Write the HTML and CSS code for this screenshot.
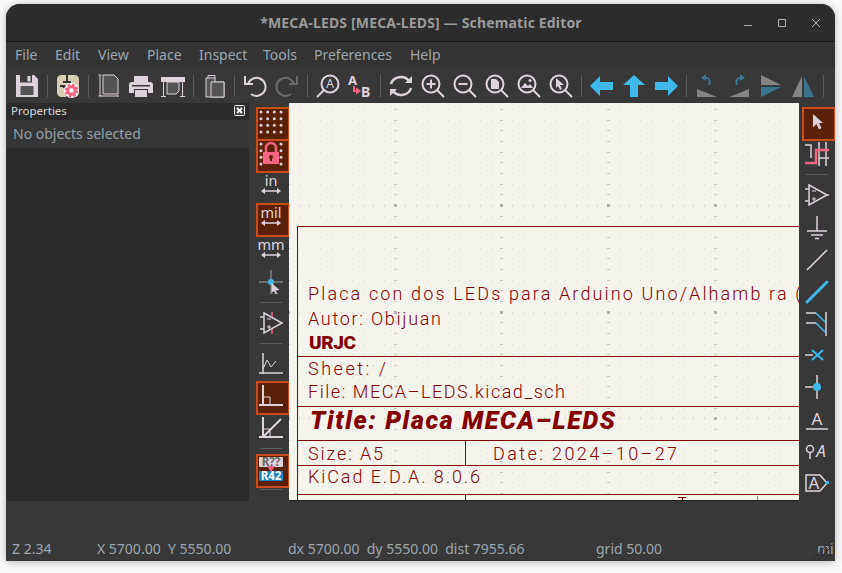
FILE: index.html
```html
<!DOCTYPE html>
<html lang="en">
<head>
<meta charset="utf-8">
<title>Schematic Editor</title>
<link rel="stylesheet" href="styles.css">
</head>
<body>
<div class="window">
  <header class="titlebar">
    <div class="title">*MECA-LEDS [MECA-LEDS] — Schematic Editor</div>
    <div class="wincontrols">
      <svg class="wc" viewBox="0 0 34 24"><path class="wcl" d="M13 14.500h8"/></svg>
      <svg class="wc" viewBox="0 0 34 24"><path class="wcl" d="M13.500 8.500h7v7h-7z"/></svg>
      <svg class="wc" viewBox="0 0 34 24"><path class="wcl" d="M13 8l8 8M21 8l-8 8"/></svg>
    </div>
  </header>
  <nav class="menubar">
    <span class="m m-file">File</span><span class="m m-edit">Edit</span><span class="m m-view">View</span><span class="m m-place">Place</span><span class="m m-inspect">Inspect</span><span class="m m-tools">Tools</span><span class="m m-prefs">Preferences</span><span class="m">Help</span>
  </nav>
  <div class="toolbar">
    <span class="tb"><svg class="ico" viewBox="0 0 24 24"><path class="f" d="M1 1h18l4 4v18H1z"/><path class="fd" d="M5 1h12v7.500H5z"/><path class="f" d="M12.500 2h3v5.500h-3z"/><path class="fg" d="M5.500 12h13v9h-13z"/></svg></span>
    <span class="vsep"></span>
    <span class="tb"><svg class="ico" viewBox="0 0 24 24"><rect x="1" y="1" width="22" height="22" rx="4.500" fill="#d6cfb4"/><path d="M11 1v7M7 8h8M4 12h6M11 13v10M7 13h4" stroke="#333" stroke-width="2" fill="none"/><circle cx="15.500" cy="16.500" r="7.500" fill="#fff"/><circle cx="15.500" cy="16.500" r="3.800" fill="none" stroke="#f2647f" stroke-width="3"/><circle cx="15.500" cy="16.500" r="5.800" fill="none" stroke="#f2647f" stroke-width="2.200" stroke-dasharray="2.500 2.050"/></svg></span>
    <span class="vsep"></span>
    <span class="tb"><svg class="ico" viewBox="0 0 24 24"><path class="fg s1" d="M6 1h11l4 4v15H6z"/><path class="s1" d="M1.500 1h3M3 1v21M1.500 22h3M4 22h17M21 21v2"/></svg></span>
    <span class="tb"><svg class="ico" viewBox="0 0 24 24"><path class="f" d="M5 2h14v6H5z"/><path class="f" d="M3 8h18a3 3 0 0 1 3 3v8h-5v-4H5v4H0v-8a3 3 0 0 1 3-3z"/><path class="f" d="M6 16h12v7H6z"/><path class="fd" d="M3 11h18v1.500H3z"/></svg></span>
    <span class="tb"><svg class="ico" viewBox="0 0 24 24"><path class="f" d="M0 3h24v5H0z"/><path class="s1" d="M2.500 8v14M21.500 8v14M0 22.500h5M19 22.500h5"/><path class="fg s1" d="M6 8h12v9l-3 3H6z"/></svg></span>
    <span class="vsep"></span>
    <span class="tb"><svg class="ico" viewBox="0 0 24 24"><path class="fg s1" d="M4 4h9v4h9v15H4z"/><path class="fg s1" d="M9 8h13v15H9z"/><path class="s1" d="M6 4V1.500h7V4"/></svg></span>
    <span class="vsep"></span>
    <span class="tb"><svg class="ico" viewBox="0 0 24 24"><path class="s2" d="M5 10a9 9 0 1 1 3 10"/><path class="s2" d="M2 2v8h8"/></svg></span>
    <span class="tb"><svg class="ico" viewBox="0 0 24 24"><path class="s2 dim" d="M19 10a9 9 0 1 0-3 10"/><path class="s2 dim" d="M22 2v8h-8"/></svg></span>
    <span class="vsep"></span>
    <span class="tb"><svg class="ico" viewBox="0 0 24 24"><circle class="s2" cx="14" cy="10" r="8.500"/><path class="s2" d="M8 16l-7 7"/><text class="it" x="14" y="14" text-anchor="middle">A</text></svg></span>
    <span class="tb"><svg class="ico" viewBox="0 0 24 24"><text class="it bold" x="0" y="11">A</text><text class="it bold big" x="13" y="23">B</text><path class="pk" d="M6 12v5h3"/><path class="pf" d="M8 13.500l5 3.500-5 3.500z"/></svg></span>
    <span class="vsep"></span>
    <span class="tb"><svg class="ico" viewBox="0 0 24 24"><path class="s25" d="M2 10a10 9 0 0 1 18-3"/><path class="s25" d="M22 14a10 9 0 0 1-18 3"/><path class="f" d="M16 9h7V2zM8 15H1v7z"/></svg></span>
    <span class="tb"><svg class="ico" viewBox="0 0 24 24"><circle class="s2" cx="10" cy="10" r="8.500"/><path class="s2" d="M16 16l7 7M10 5.500v9M5.500 10h9"/></svg></span>
    <span class="tb"><svg class="ico" viewBox="0 0 24 24"><circle class="s2" cx="10" cy="10" r="8.500"/><path class="s2" d="M16 16l7 7M5.500 10h9"/></svg></span>
    <span class="tb"><svg class="ico" viewBox="0 0 24 24"><circle class="s2" cx="10" cy="10" r="8.500"/><path class="s2" d="M16 16l7 7"/><path class="f" d="M6 5h5l3 3v7H6z"/></svg></span>
    <span class="tb"><svg class="ico" viewBox="0 0 24 24"><circle class="s2" cx="10" cy="10" r="8.500"/><path class="s2" d="M16 16l7 7"/><path class="f" d="M4 14l4-5 3 3 2-2 3 4z"/><circle class="f" cx="13" cy="6.500" r="1.500"/></svg></span>
    <span class="tb"><svg class="ico" viewBox="0 0 24 24"><circle class="s2" cx="10" cy="10" r="8.500"/><path class="s2" d="M16 16l7 7"/><path class="f" d="M7 4l8 7h-4l2 4-2 1-2-4-2 2z"/></svg></span>
    <span class="vsep"></span>
    <span class="tb"><svg class="ico" viewBox="0 0 24 24"><path class="bl" d="M0 12l10-10v6h13v8H10v6z"/></svg></span>
    <span class="tb"><svg class="ico" viewBox="0 0 24 24"><path class="bl" d="M12 1l11 10h-7v12H8V11H1z"/></svg></span>
    <span class="tb"><svg class="ico" viewBox="0 0 24 24"><path class="bl" d="M24 12L14 2v6H1v8h13v6z"/></svg></span>
    <span class="vsep"></span>
    <span class="tb"><svg class="ico" viewBox="0 0 24 24"><path class="gr" d="M2 15l20 8H2z"/><path class="db" d="M9 4c4-1 7 2 5 7"/><path class="dbf" d="M11 0L6 4l5 3z"/></svg></span>
    <span class="tb"><svg class="ico" viewBox="0 0 24 24"><path class="gr" d="M22 15L2 23h20z"/><path class="db" d="M15 4c-4-1-7 2-5 7"/><path class="dbf" d="M13 0l5 4-5 3z"/></svg></span>
    <span class="tb"><svg class="ico" viewBox="0 0 24 24"><path class="gr" d="M2 1l20 10H2z"/><path class="dbf" d="M2 13h20L2 23z"/></svg></span>
    <span class="tb"><svg class="ico" viewBox="0 0 24 24"><path class="gr" d="M11 2v21H1z"/><path class="dbf" d="M13 2v21h10z"/></svg></span>
    <span class="vsep"></span>
  </div>
  <main class="workarea">
    <aside class="panel">
      <div class="panel-head"><span>Properties</span><svg class="closebox" viewBox="0 0 11 11"><rect class="cb-f" x="0.500" y="0.500" width="10" height="10" rx="1"/><path class="cb-x" d="M3 3l5 5M8 3l-5 5"/></svg></div>
      <div class="panel-body">No objects selected</div>
    </aside>
    <div class="ltools">
      <span class="tb on"><svg class="ico" viewBox="0 0 24 24"><g class="f"><circle cx="2" cy="2" r="1.500"/><circle cx="8.700" cy="2" r="1.500"/><circle cx="15.300" cy="2" r="1.500"/><circle cx="22" cy="2" r="1.500"/><circle cx="2" cy="8.700" r="1.500"/><circle cx="8.700" cy="8.700" r="1.500"/><circle cx="15.300" cy="8.700" r="1.500"/><circle cx="22" cy="8.700" r="1.500"/><circle cx="2" cy="15.300" r="1.500"/><circle cx="8.700" cy="15.300" r="1.500"/><circle cx="15.300" cy="15.300" r="1.500"/><circle cx="22" cy="15.300" r="1.500"/><circle cx="2" cy="22" r="1.500"/><circle cx="8.700" cy="22" r="1.500"/><circle cx="15.300" cy="22" r="1.500"/><circle cx="22" cy="22" r="1.500"/></g></svg></span>
      <span class="tb on"><svg class="ico" viewBox="0 0 24 24"><g class="f"><circle cx="2" cy="2" r="1.500"/><circle cx="22" cy="2" r="1.500"/><circle cx="2" cy="8.700" r="1.500"/><circle cx="22" cy="8.700" r="1.500"/><circle cx="2" cy="15.300" r="1.500"/><circle cx="22" cy="15.300" r="1.500"/><circle cx="2" cy="22" r="1.500"/><circle cx="22" cy="22" r="1.500"/></g><path class="pk25" d="M7 10V6a5 5 0 0 1 10 0v4"/><path class="pf" d="M5 10h14a1 1 0 0 1 1 1v10a1 1 0 0 1-1 1H5a1 1 0 0 1-1-1V11a1 1 0 0 1 1-1z"/><circle cx="12" cy="15" r="2" fill="#5a2008"/><path d="M11 15h2v4h-2z" fill="#5a2008"/></svg></span>
      <span class="tb"><svg class="ico" viewBox="0 0 24 24"><text class="unit" x="12" y="12" text-anchor="middle">in</text><path class="s1h" d="M4 17h16"/><path class="f" d="M2 17l4-3v6zM22 17l-4-3v6z"/></svg></span>
      <span class="tb on"><svg class="ico" viewBox="0 0 24 24"><text class="unit" x="12" y="12" text-anchor="middle">mil</text><path class="s1h" d="M4 17h16"/><path class="f" d="M2 17l4-3v6zM22 17l-4-3v6z"/></svg></span>
      <span class="tb"><svg class="ico" viewBox="0 0 24 24"><text class="unit" x="12" y="12" text-anchor="middle">mm</text><path class="s1h" d="M4 17h16"/><path class="f" d="M2 17l4-3v6zM22 17l-4-3v6z"/></svg></span>
      <span class="tb"><svg class="ico" viewBox="0 0 24 24"><path class="s1g" d="M12 0v24M0 12h24"/><circle class="bl" cx="12" cy="12" r="3"/><path class="f" d="M12.500 13l8 7-4 .5 2 3.500h-2l-1.500-3-2.500 2z"/></svg></span>
      <span class="hsep"></span>
      <span class="tb"><svg class="ico" viewBox="0 0 24 24"><path class="s15" d="M5 2l18 10L5 22zM1 6h4M1 18h4M23 12h1"/><path class="s1" d="M8 8h4M10 14v4M8 16h4"/><path class="pk15" d="M13 1v5M13 18v5"/></svg></span>
      <span class="hsep"></span>
      <span class="tb"><svg class="ico" viewBox="0 0 24 24"><path class="s15" d="M4 1v21M0 21h24"/><path class="s1" d="M4 17l4-9 4 7 5-6"/></svg></span>
      <span class="tb on"><svg class="ico" viewBox="0 0 24 24"><path class="s2" d="M4 1v20M0 21h24"/><path class="s1" d="M4 13h7v8"/></svg></span>
      <span class="tb"><svg class="ico" viewBox="0 0 24 24"><path class="s2" d="M4 1v20M0 21h24M4 21L22 3"/><path class="s1" d="M4 13h7v8"/></svg></span>
      <span class="hsep"></span>
      <span class="tb on"><svg class="ico" viewBox="0 0 24 24"><rect class="f" x="0" y="0" width="24" height="10" rx="1"/><text class="ref dark" x="12" y="9" text-anchor="middle">R??</text><rect class="bl2" x="0" y="14" width="24" height="10"/><text class="ref light" x="12" y="23" text-anchor="middle">R42</text><path class="pf" d="M8 9h8l-4 6z"/></svg></span>
      <span class="hsep"></span>
    </div>
    <div class="canvas">
      <svg class="sheet" viewBox="289 103 510 397" width="510" height="397">
        <defs>
          <pattern id="pminor" patternUnits="userSpaceOnUse" x="299" y="13" width="32" height="32"><path class="gd" d="M0 0h1v1H0zM10 0h1v1h-1zM21 0h1v1h-1zM0 11h1v1H0zM10 11h1v1h-1zM21 11h1v1h-1zM0 21h1v1H0zM10 21h1v1h-1zM21 21h1v1h-1z"/></pattern>
          <pattern id="pcol" patternUnits="userSpaceOnUse" x="74" y="13" width="320" height="32"><path class="gm" d="M0 0h3v1H0zM0 11h3v1H0zM0 21h3v1H0zM106 0h3v1h-3zM106 11h3v1h-3zM106 21h3v1h-3zM213 0h3v1h-3zM213 11h3v1h-3zM213 21h3v1h-3z"/></pattern>
          <pattern id="prow" patternUnits="userSpaceOnUse" x="299" y="-116" width="32" height="320"><path class="gr2" d="M0 0h1v3H0zM10 0h1v3h-1zM21 0h1v3h-1zM0 107h1v3H0zM10 107h1v3h-1zM21 107h1v3h-1zM0 213h1v3H0zM10 213h1v3h-1zM21 213h1v3h-1z"/></pattern>
          <pattern id="pmajor" patternUnits="userSpaceOnUse" x="74" y="-116" width="320" height="320"><path class="gx" d="M0 0h3v3H0zM106 0h3v3h-3zM213 0h3v3h-3zM0 107h3v3H0zM106 107h3v3h-3zM213 107h3v3h-3zM0 213h3v3H0zM106 213h3v3h-3zM213 213h3v3h-3z"/></pattern>
        </defs>
        <rect class="paper" x="289" y="103" width="510" height="397"/>
        <rect x="289" y="103" width="510" height="397" fill="url(#pminor)"/>
        <rect x="289" y="103" width="510" height="397" fill="url(#prow)"/>
        <rect x="289" y="103" width="510" height="397" fill="url(#pcol)"/>
        <rect x="289" y="103" width="510" height="397" fill="url(#pmajor)"/>
        <path class="rule" d="M297.500 500V226.500H799M297 356.500h502M297 406.500h502M297 440.500h502M297 465.500h502M297 494.500h502M465.500 440v25M465.500 494v6M678 497.500h8M682.500 497v3"/>
        <path class="rule-grey" d="M757.500 496v4"/>
        <text class="tx" x="308" y="300" textLength="493">Placa con dos LEDs para Arduino Uno/Alhamb ra (</text>
        <text class="tx" x="308" y="325" textLength="133">Autor: Obijuan</text>
        <text class="tx tb-b" x="309" y="349" textLength="47">URJC</text>
        <text class="tx" x="308" y="375" textLength="78">Sheet: /</text>
        <text class="tx" x="308" y="398" textLength="257">File: MECA–LEDS.kicad_sch</text>
        <text class="tx tt" x="310" y="429" textLength="305">Title: Placa MECA–LEDS</text>
        <text class="tx" x="308" y="460" textLength="75">Size: A5</text>
        <text class="tx" x="493" y="460" textLength="184">Date: 2024–10–27</text>
        <text class="tx" x="308" y="483" textLength="172">KiCad E.D.A. 8.0.6</text>
      </svg>
    </div>
    <div class="rtools">
      <span class="tb on"><svg class="ico" viewBox="0 0 24 24"><path class="f" d="M8 4l10 9h-4l2.500 5-2.500 1.500-2.500-5.500-3.500 3.500z"/></svg></span>
      <span class="tb"><svg class="ico" viewBox="0 0 24 24"><path class="s15" d="M0 3h6v13M14 0v24M21 0v24M14 16h10"/><path class="pk25" d="M0 21h11V8h13"/></svg></span>
      <span class="hsep"></span>
      <span class="tb"><svg class="ico" viewBox="0 0 24 24"><path class="s15" d="M4 2l18 10L4 22zM0 6h4M0 18h4M22 12h2"/><path class="s1" d="M7 8h4M9 14v4M7 16h4"/></svg></span>
      <span class="tb"><svg class="ico" viewBox="0 0 24 24"><path class="s15" d="M12 1v15M2 16h20M6 20h12M10 23.500h4"/></svg></span>
      <span class="tb"><svg class="ico" viewBox="0 0 24 24"><path class="s15" d="M2 23L22 3"/></svg></span>
      <span class="tb"><svg class="ico" viewBox="0 0 24 24"><path class="bl3" d="M2 23L22 3"/></svg></span>
      <span class="tb"><svg class="ico" viewBox="0 0 24 24"><path class="s15" d="M21 1v24M1 2h10M1 12h10"/><path class="bl15" d="M11 2l9 9M11 12l9 9"/></svg></span>
      <span class="tb"><svg class="ico" viewBox="0 0 24 24"><path class="s15" d="M0 12h8"/><path class="bl2s" d="M7 7l11 10M18 7L7 17"/></svg></span>
      <span class="tb"><svg class="ico" viewBox="0 0 24 24"><path class="s15" d="M12 0v24M0 12h8"/><circle class="bl" cx="12" cy="12" r="4"/></svg></span>
      <span class="tb"><svg class="ico" viewBox="0 0 24 24"><text class="lbl" x="12" y="18" text-anchor="middle">A</text><path class="s15" d="M1 22h22"/></svg></span>
      <span class="tb"><svg class="ico" viewBox="0 0 24 24"><circle class="s15" cx="5" cy="10" r="3.500"/><path class="s15" d="M5 14v6"/><text class="lbl ital" x="16" y="18" text-anchor="middle">A</text></svg></span>
      <span class="tb"><svg class="ico" viewBox="0 0 24 24"><path class="s15" d="M1 4h14l7 8-7 8H1z"/><text class="lbl" x="9" y="18" text-anchor="middle">A</text><rect class="bl" x="21" y="10" width="3" height="3"/></svg></span>
    </div>
  </main>
  <footer class="statusbar">
    <span class="st st-z">Z 2.34</span>
    <span class="st st-xy">X 5700.00&nbsp; Y 5550.00</span>
    <span class="st st-d">dx 5700.00&nbsp; dy 5550.00&nbsp; dist 7955.66</span>
    <span class="st st-g">grid 50.00</span>
    <span class="st st-u">mi</span>
    <svg class="grip" viewBox="0 0 20 20"><path d="M1 19L19 1M7 19L19 7M13 19l6-6"/></svg>
  </footer>
</div>
</body>
</html>
```

FILE: styles.css
```css
* { box-sizing: border-box; }
html, body { margin: 0; padding: 0; background: #fafafa; }
body { width: 842px; height: 573px; overflow: hidden; font-family: "Noto Sans", sans-serif; }

.window {
  width: 829px; height: 557px; margin: 4px 7px 12px 6px;
  display: flex; flex-direction: column;
  background: #383838; border-radius: 14px 14px 0 0; overflow: hidden;
  box-shadow: 0 1px 8px rgba(0,0,0,.28);
}

.titlebar {
  height: 38px; flex: none; background: #2c2c2c; border-bottom: 1px solid #171717;
  display: flex; align-items: center; justify-content: center; position: relative;
}
.title { font-size: 14px; font-weight: 700; color: #9a9a9a; margin-left: 1px; letter-spacing: .16px; }
.wincontrols { position: absolute; right: 2px; top: 7px; display: flex; }
.wc { width: 34px; height: 24px; }
.wcl { stroke: #b4b4b4; stroke-width: 1; fill: none; }

.menubar { height: 26px; flex: none; background: #333; display: flex; align-items: center; padding: 0 0 2px 9px; font-size: 14px; color: #9ca6ae; }
.m-file { width: 40px; } .m-edit { width: 43px; } .m-view { width: 49px; } .m-place { width: 52px; }
.m-inspect { width: 64px; } .m-tools { width: 51px; } .m-prefs { width: 96px; }

.toolbar { height: 35px; flex: none; background: #383838; display: flex; align-items: center; padding-left: 5px; }
.tb { width: 32px; height: 32px; flex: none; display: flex; align-items: center; justify-content: center; }
.tb.on { position: relative; }
.tb.on::before { content: ""; position: absolute; left: 1px; top: 1px; width: 30px; height: 30px; background: #5a2008; border: 2px solid #c94c1a; }
.ico { width: 24px; height: 24px; position: relative; display: block; overflow: visible; }
.vsep { width: 9px; height: 22px; flex: none; display: block; position: relative; }
.vsep::after { content: ""; position: absolute; left: 4px; top: 0; width: 1px; height: 22px; background: #5c5c5c; }
.hsep { width: 32px; height: 9px; flex: none; display: flex; align-items: center; justify-content: center; }
.hsep::after { content: ""; width: 22px; height: 1px; background: #5c5c5c; }

.f { fill: #ded3dd; }
.fd { fill: #3a3a3a; }
.fg { fill: #545454; }
.s1 { stroke: #ded3dd; stroke-width: 1; fill: none; }
.fg.s1 { fill: #545454; }
.s15 { stroke: #ded3dd; stroke-width: 1.5; fill: none; }
.s2 { stroke: #ded3dd; stroke-width: 2; fill: none; }
.s2.dim { stroke: #6a6a6a; }
.s25 { stroke: #ded3dd; stroke-width: 2.5; fill: none; }
.s1h { stroke: #ded3dd; stroke-width: 1.5; }
.s1g { stroke: #a8a2a8; stroke-width: 1; }
.pk { stroke: #f2647f; stroke-width: 2; fill: none; }
.pk15 { stroke: #f2647f; stroke-width: 1.5; fill: none; }
.pk25 { stroke: #f2647f; stroke-width: 2.5; fill: none; }
.pf { fill: #f2647f; }
.bl { fill: #3fb8ec; }
.bl2 { fill: #1b86bb; }
.bl3 { stroke: #3fb8ec; stroke-width: 3; stroke-linecap: round; fill: none; }
.bl15 { stroke: #3fb8ec; stroke-width: 1.5; fill: none; }
.bl2s { stroke: #3fb8ec; stroke-width: 2; fill: none; }
.gr { fill: #858585; }
.db { stroke: #3a7490; stroke-width: 2; fill: none; }
.dbf { fill: #3a7490; }
.it { font: 400 12px "Noto Sans", sans-serif; fill: #ded3dd; }
.it.bold { font-weight: 700; font-size: 13px; }
.it.big { font-size: 14px; }
.unit { font: 400 14.500px "Noto Sans", sans-serif; fill: #ded3dd; }
.ref { font: 700 11.500px "Noto Sans", sans-serif; }
.ref.dark { fill: #666; }
.ref.light { fill: #fff; }
.lbl { font: 400 17px "Noto Sans", sans-serif; fill: #ded3dd; }
.lbl.ital { font-style: italic; }

.workarea { flex: none; height: 398px; display: flex; background: #383838; }
.panel { width: 242px; margin-left: 1px; flex: none; background: #2a2a2a; font-size: 14px; }
.panel-head { height: 17px; display: flex; align-items: center; justify-content: space-between; padding: 0 4px 2px; font-size: 11.500px; color: #d6d6d6; }
.closebox { width: 11px; height: 11px; }
.cb-f { fill: #3a3a3a; stroke: #eee; stroke-width: 1; }
.cb-x { stroke: #fff; stroke-width: 2; fill: none; }
.panel-body { height: 28px; background: #363636; color: #93a0a8; padding: 4px 6px; font-size: 14px; line-height: 19px; }
.ltools { width: 40px; flex: none; display: flex; flex-direction: column; padding: 3px 2px 0 6px; }
.canvas { width: 510px; flex: none; height: 398px; position: relative; border-bottom: 1px solid #1e1e1e; }
.sheet { display: block; }
.paper { fill: #f4f4ed; }
.gd { fill: #d2d2ca; }
.gm { fill: #c8c8c2; }
.gr2 { fill: #dcdcd5; }
.gx { fill: #b0b0ac; }
.rule { stroke: #840000; stroke-width: 1; fill: none; }
.rule-grey { stroke: #8a8a8a; stroke-width: 1; fill: none; }
.tx { font-family: "Roboto", sans-serif; font-weight: 350; font-size: 18px; fill: #840000; }
.tb-b { font-weight: 900; font-size: 19px; }
.tt { font-weight: 900; font-style: italic; font-size: 25px; }
.rtools { width: 36px; flex: none; display: flex; flex-direction: column; padding: 3px 2px 0 2px; }

.statusbar { flex: 1; background: #383838; position: relative; display: flex; align-items: flex-end; padding: 0 0 3px 6px; font-size: 14px; line-height: 18px; color: #9ca6ae; }
.st { display: block; white-space: nowrap; flex: none; }
.st-z { width: 85px; } .st-xy { width: 191px; } .st-d { width: 308px; } .st-g { width: 221px; }
.grip { position: absolute; right: 4px; bottom: 0; width: 20px; height: 20px; }
.grip path { stroke: #2a2a2a; stroke-width: 1; fill: none; }
```
